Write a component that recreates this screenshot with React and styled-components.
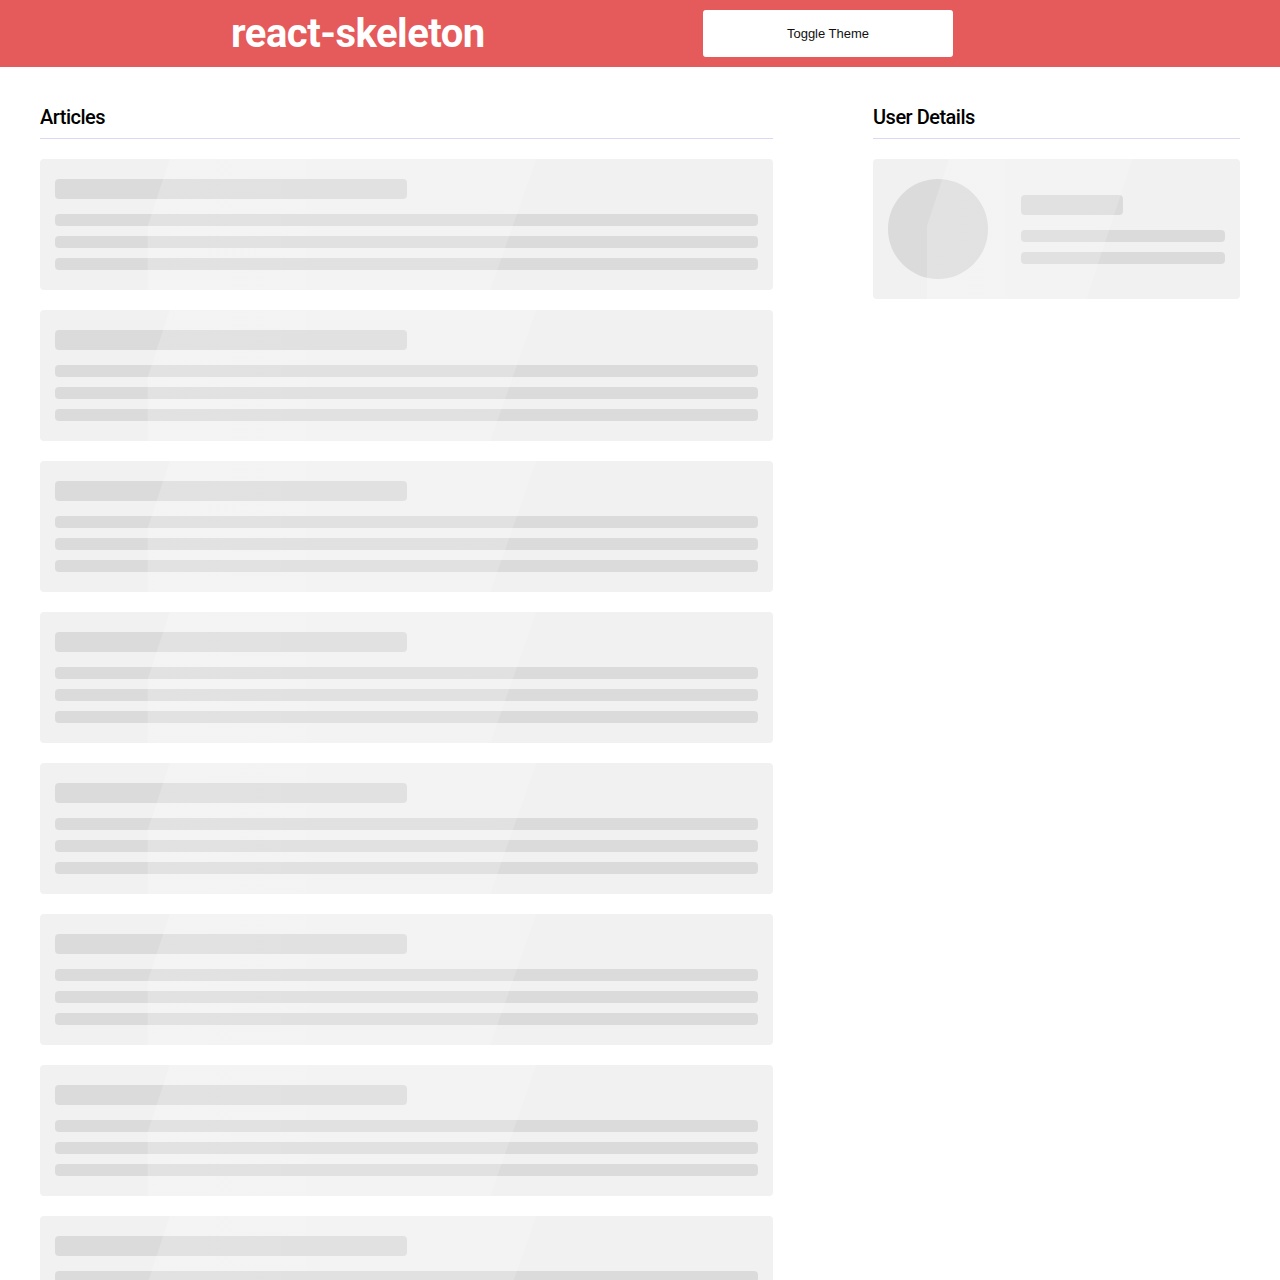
import React from "react";
import styled, { createGlobalStyle } from "styled-components";

const Global = createGlobalStyle`
  * { box-sizing: border-box; }
  body { margin: 0; background: #ffffff; font-family: Roboto, "Liberation Sans", sans-serif; }
`;

const Header = styled.header`
  height: 67px;
  background: #e55a5a;
  display: flex;
  align-items: center;
  padding-left: 231px;
  gap: 220px;
`;

const Title = styled.h1`
  margin: 0;
  color: #ffffff;
  font-family: Roboto, sans-serif;
  font-weight: 700;
  font-size: 40px;
  line-height: 1;
  letter-spacing: -0.5px;
  width: 252px;
  white-space: nowrap;
`;

const ToggleButton = styled.button`
  width: 250px;
  height: 47px;
  background: #ffffff;
  border: none;
  border-radius: 3px;
  font-family: "Liberation Sans", Arial, sans-serif;
  font-size: 13px;
  color: #111;
  cursor: pointer;
`;

const Main = styled.main`
  display: grid;
  grid-template-columns: 733px 367px;
  column-gap: 100px;
  padding: 40px;
  align-items: start;
`;

const Column = styled.section`
  display: flex;
  flex-direction: column;
`;

const SectionTitle = styled.h2`
  margin: 0 0 20px;
  font-family: Roboto, sans-serif;
  font-weight: 500;
  font-size: 20px;
  line-height: 20px;
  letter-spacing: -0.5px;
  color: #000;
  padding-bottom: 11px;
  border-bottom: 1px solid #dcd8f4;
`;

const Card = styled.div`
  position: relative;
  overflow: hidden;
  background: #f1f1f1;
  border-radius: 4px;
  padding: 20px 15px;
  margin-bottom: 20px;
  display: flex;
  flex-direction: ${(p) => (p.$user ? "row" : "column")};
  align-items: ${(p) => (p.$user ? "center" : "stretch")};

  &::after {
    content: "";
    position: absolute;
    inset: 0;
    pointer-events: none;
    background: linear-gradient(90deg, rgba(255,255,255,0.2), rgba(255,255,255,0.14));
    clip-path: polygon(
      calc(14.7% + 22px) 0,
      calc(64.7% + 22px) 0,
      calc(64.7% - 24px) 100%,
      14.7% 100%,
      14.7% 67px
    );
  }
`;

const Bar = styled.div`
  background: #dbdbdb;
  border-radius: 4px;
  height: ${(p) => p.$h}px;
  width: ${(p) => p.$w || "100%"};
  margin-top: ${(p) => p.$mt || 0}px;
`;

const Avatar = styled.div`
  width: 100px;
  height: 100px;
  border-radius: 50%;
  background: #dbdbdb;
  flex: 0 0 100px;
`;

const UserInfo = styled.div`
  flex: 1;
  margin-left: 33px;
  display: flex;
  flex-direction: column;
`;

function ArticleSkeleton() {
  return (
    <Card>
      <Bar $h={20} $w="50%" />
      <Bar $h={12} $mt={15} />
      <Bar $h={12} $mt={10} />
      <Bar $h={12} $mt={10} />
    </Card>
  );
}

export default function App() {
  return (
    <>
      <Global />
      <Header>
        <Title>react-skeleton</Title>
        <ToggleButton>Toggle Theme</ToggleButton>
      </Header>
      <Main>
        <Column>
          <SectionTitle>Articles</SectionTitle>
          {Array.from({ length: 10 }).map((_, i) => (
            <ArticleSkeleton key={i} />
          ))}
        </Column>
        <Column>
          <SectionTitle>User Details</SectionTitle>
          <Card $user>
            <Avatar />
            <UserInfo>
              <Bar $h={20} $w="50%" />
              <Bar $h={12} $mt={15} />
              <Bar $h={12} $mt={10} />
            </UserInfo>
          </Card>
        </Column>
      </Main>
    </>
  );
}
